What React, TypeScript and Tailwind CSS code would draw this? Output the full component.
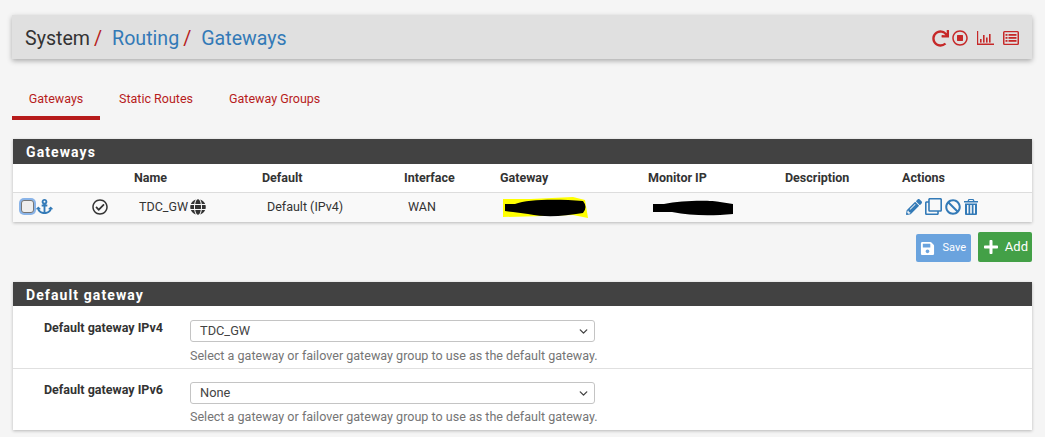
import React from 'react';
import {
  FaAnchor,
  FaBan,
  FaGlobe,
  FaPencilAlt,
  FaPlus,
  FaRedo,
  FaRegCheckCircle,
  FaRegClone,
  FaRegStopCircle,
  FaSave,
} from 'react-icons/fa';
import { ChevronDown } from 'lucide-react';

const headers = [
  { label: 'Name', width: 'w-[128px]' },
  { label: 'Default', width: 'w-[142px]' },
  { label: 'Interface', width: 'w-[96px]' },
  { label: 'Gateway', width: 'w-[148px]' },
  { label: 'Monitor IP', width: 'w-[137px]' },
  { label: 'Description', width: 'w-[117px]' },
  { label: 'Actions', width: 'w-[120px]' },
];

const BarChart = () => (
  <svg width="17" height="14" viewBox="0 0 17 14" fill="currentColor">
    <path d="M0 0h1.2v12.6H17V14H0z" />
    <rect x="3" y="8" width="1.6" height="3.6" />
    <rect x="6" y="4" width="1.6" height="7.6" />
    <rect x="9" y="6.5" width="1.6" height="5.1" />
    <rect x="12" y="3" width="1.6" height="8.6" />
  </svg>
);

const ListAlt = () => (
  <svg width="16" height="14" viewBox="0 0 16 14" fill="currentColor">
    <path fillRule="evenodd" d="M1.5 0h13A1.5 1.5 0 0 1 16 1.5v11a1.5 1.5 0 0 1-1.5 1.5h-13A1.5 1.5 0 0 1 0 12.5v-11A1.5 1.5 0 0 1 1.5 0zm0 1.3v11.4h13V1.3z" />
    <rect x="2.5" y="3" width="2" height="1.8" />
    <rect x="5.5" y="3" width="8" height="1.8" />
    <rect x="2.5" y="6" width="2" height="1.8" />
    <rect x="5.5" y="6" width="8" height="1.8" />
    <rect x="2.5" y="9" width="2" height="1.8" />
    <rect x="5.5" y="9" width="8" height="1.8" />
  </svg>
);

const TrashIcon = () => (
  <svg width="14" height="16" viewBox="0 0 14 16" fill="currentColor">
    <path fillRule="evenodd" d="M4.5 0h5l1 2H14v1.6H0V2h3.5zM5.3 1.1 5 2h4l-.3-.9z" />
    <path fillRule="evenodd" d="M1 4.5h12V15a1 1 0 0 1-1 1H2a1 1 0 0 1-1-1zM3 6v8.4h1.5V6zm3.2 0v8.4h1.6V6zm3.3 0v8.4H11V6z" />
  </svg>
);

const PanelHeading = ({ title, height }: { title: string; height: string }) => (
  <div className={`${height} bg-[#424242] pl-[13px] text-[14px] leading-[26px] font-bold tracking-[1.1px] text-white`}>
    {title}
  </div>
);

const GatewayRow = ({ label, value, first }: { label: string; value: string; first?: boolean }) => (
  <div className={`flex ${first ? 'h-[63px] border-b border-[#e0e0e0] pt-[14px]' : 'h-[61px] pt-[13px]'}`}>
    <div className="w-[177px] pl-[31px] text-[12.5px] leading-[16px] font-bold text-[#333]">{label}</div>
    <div className="w-[405px]">
      <div className="flex h-[22px] items-center justify-between rounded-[3px] border border-[#c4c4c4] bg-white pr-[4px] pl-[9px] text-[12.8px] text-[#444]">
        <span>{value}</span>
        <ChevronDown size={13} strokeWidth={2.5} className="text-[#444]" />
      </div>
      <p className={`${first ? 'mt-[6px]' : 'mt-[5px]'} text-[12.55px] leading-[16px] whitespace-nowrap text-[#757575]`}>
        Select a gateway or failover gateway group to use as the default gateway.
      </p>
    </div>
  </div>
);

export default function App() {
  return (
    <div className="h-[437px] overflow-hidden bg-[#f5f5f5] pt-[15px] pr-[13px] pl-[12px] font-['Roboto',sans-serif] text-[#333]">
      <header className="flex h-[44px] items-center justify-between bg-[#e0e0e0] px-[13px] pt-[2px] shadow-[0_2px_5px_rgba(0,0,0,0.3)]">
        <h1 className="flex items-center pt-[1px] text-[19.6px] text-[#333]">
          <span>System</span>
          <span className="ml-[4px] text-[#b71c1c]">/</span>
          <span className="ml-[10px] text-[#337ab7]">Routing</span>
          <span className="ml-[4px] text-[#b71c1c]">/</span>
          <span className="ml-[10px] text-[#337ab7]">Gateways</span>
        </h1>
        <div className="flex items-center text-[#c62828]">
          <FaRedo size={17} />
          <FaRegStopCircle size={16} className="ml-[3px]" />
          <span className="ml-[9px]"><BarChart /></span>
          <span className="ml-[9px]"><ListAlt /></span>
        </div>
      </header>

      <nav className="mt-[21px] flex h-[40px] text-[12.5px] text-[#b71c1c]">
        <div className="flex w-[88px] justify-center border-b-[4px] border-[#b71c1c] pt-[10px]">Gateways</div>
        <div className="w-[129px] pt-[10px] pl-[19px]">Static Routes</div>
        <div className="pt-[10px]">Gateway Groups</div>
      </nav>

      <section className="mt-[19px] ml-[1px] bg-white shadow-[0_1px_3px_rgba(0,0,0,0.25)]">
        <PanelHeading title="Gateways" height="h-[25px]" />
        <div className="flex h-[29px] items-center border-b border-[#ddd] pt-[1px] pl-[121px] text-[12.5px] font-bold">
          {headers.map((h) => (
            <div key={h.label} className={h.width}>{h.label}</div>
          ))}
        </div>
        <div className="flex h-[29px] items-center bg-[#f9f9f9] text-[12.5px] text-[#333]">
          <div className="flex w-[126px] items-center pb-[2px] pl-[8px]">
            <span className="h-[13px] w-[13px] rounded-[3px] border border-[#767676] bg-[#eee] shadow-[0_0_0_2px_#8ab4e8]" />
            <FaAnchor size={17} className="ml-[2px] text-[#337ab7]" />
            <FaRegCheckCircle size={16} className="ml-[39px] text-[#333]" />
          </div>
          <div className="flex w-[128px] items-center">
            TDC_GW
            <FaGlobe size={16} className="mb-[2px] ml-[2px] text-[#333]" />
          </div>
          <div className="w-[141px]">Default (IPv4)</div>
          <div className="w-[95px]">WAN</div>
          <div className="w-[149px]">
            <svg width="85" height="22" viewBox="0 0 85 22" className="block">
              <path d="M0 2 L28 2 L70 0 L82 3 L85 21 L70 18 L40 19 L0 20 Z" fill="#ffff00" />
              <path d="M2 7 L12 7 C25 2 55 2 80 4 Q85 10 80 16 C60 19 45 21 25 17 L10 15 L2 14 Z" fill="#000" />
            </svg>
          </div>
          <div className="w-[254px]">
            <svg width="82" height="16" viewBox="0 0 82 16" className="block">
              <path d="M1 4 L12 4 C30 0 60 0 68 2 L81 4 L81 14 C60 16 40 16 20 12 L1 12 Z" fill="#000" />
            </svg>
          </div>
          <div className="flex items-center pb-[2px] text-[#337ab7]">
            <FaPencilAlt size={16} />
            <FaRegClone size={17} className="ml-[3px]" />
            <FaBan size={16} className="ml-[3px]" />
            <span className="ml-[3px]"><TrashIcon /></span>
          </div>
        </div>
      </section>

      <div className="mt-[10px] flex h-[30px] items-end justify-end gap-[7px]">
        <button className="flex h-[28px] w-[55px] items-center justify-between rounded-[2px] bg-[#6aa3de] pr-[5px] pl-[4px] text-[11px] text-white">
          <FaSave size={15} />
          Save
        </button>
        <button className="flex h-[30px] w-[54px] items-center justify-between rounded-[2px] bg-[#43a047] pr-[4px] pl-[5px] text-[13px] text-white">
          <FaPlus size={16} />
          Add
        </button>
      </div>

      <section className="mt-[20px] ml-[1px] bg-white shadow-[0_1px_3px_rgba(0,0,0,0.25)]">
        <PanelHeading title="Default gateway" height="h-[24px]" />
        <GatewayRow label="Default gateway IPv4" value="TDC_GW" first />
        <GatewayRow label="Default gateway IPv6" value="None" />
      </section>
    </div>
  );
}
